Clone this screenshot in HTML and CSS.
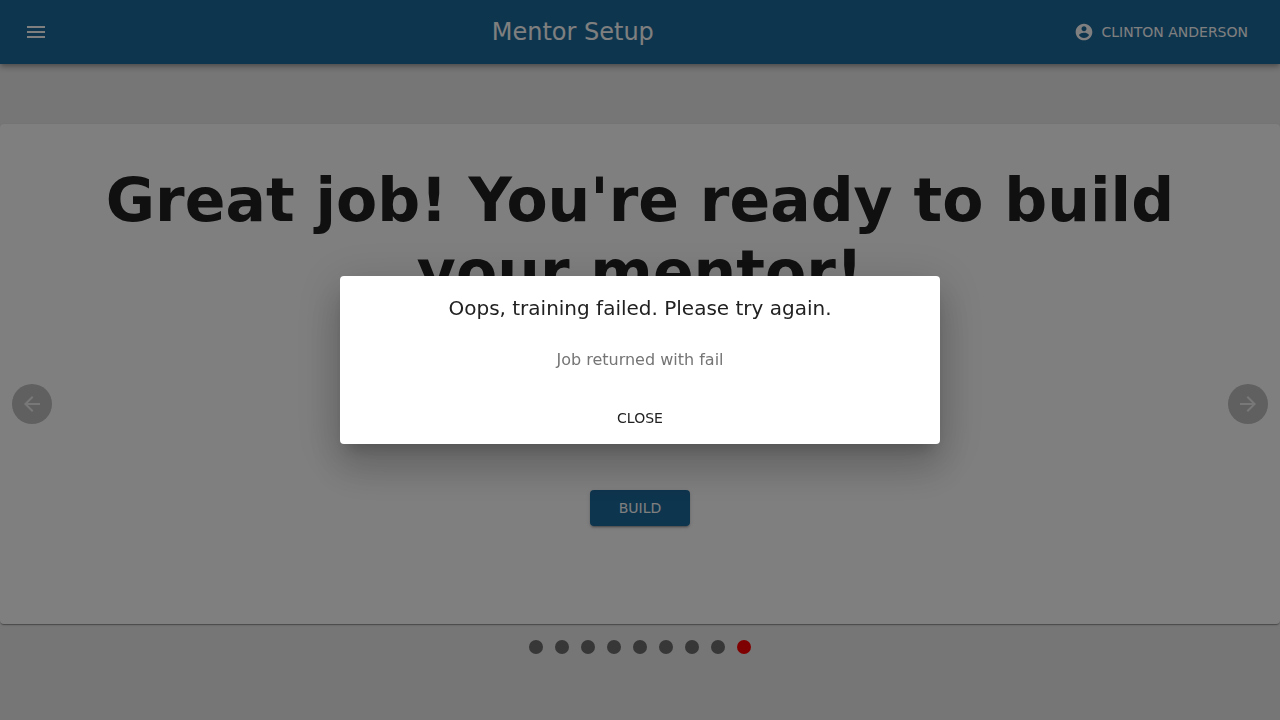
FILE: index.html
```html
<!DOCTYPE html>
<html lang="en">
<head>
<meta charset="utf-8">
<meta name="viewport" content="width=device-width, initial-scale=1">
<title>Mentor Setup</title>
<link rel="stylesheet" href="styles.css">
</head>
<body>
<header class="app-bar">
  <button class="menu-button" type="button" aria-label="Menu">
    <svg class="icon" viewBox="0 0 24 24"><path d="M3 18h18v-2H3v2zm0-5h18v-2H3v2zm0-7v2h18V6H3z"/></svg>
  </button>
  <h1 class="app-title">Mentor Setup</h1>
  <button class="user-button" type="button">
    <svg class="icon icon-small" viewBox="0 0 24 24"><path d="M12 2C6.48 2 2 6.48 2 12s4.480 10 10 10 10-4.480 10-10S17.520 2 12 2zm0 3c1.660 0 3 1.340 3 3s-1.340 3-3 3-3-1.340-3-3 1.340-3 3-3zm0 14.200c-2.500 0-4.710-1.280-6-3.220.030-1.990 4-3.080 6-3.080 1.990 0 5.970 1.090 6 3.080-1.290 1.940-3.500 3.220-6 3.220z"/></svg>
    <span>Clinton Anderson</span>
  </button>
</header>

<main class="page">
  <section class="slide">
    <button class="arrow-button" type="button" aria-label="Previous">
      <svg class="icon" viewBox="0 0 24 24"><path d="M20 11H7.830l5.590-5.590L12 4l-8 8 8 8 1.410-1.410L7.830 13H20v-2z"/></svg>
    </button>
    <div class="slide-content">
      <h2 class="slide-title">Great job! You're ready to build your mentor!</h2>
      <button class="build-button" type="button">Build</button>
    </div>
    <button class="arrow-button" type="button" aria-label="Next">
      <svg class="icon" viewBox="0 0 24 24"><path d="M12 4l-1.410 1.410L16.170 11H4v2h12.170l-5.580 5.590L12 20l8-8z"/></svg>
    </button>
  </section>
  <nav class="dots" aria-label="Slides">
    <button class="dot" type="button" aria-label="Slide 1"></button>
    <button class="dot" type="button" aria-label="Slide 2"></button>
    <button class="dot" type="button" aria-label="Slide 3"></button>
    <button class="dot" type="button" aria-label="Slide 4"></button>
    <button class="dot" type="button" aria-label="Slide 5"></button>
    <button class="dot" type="button" aria-label="Slide 6"></button>
    <button class="dot" type="button" aria-label="Slide 7"></button>
    <button class="dot" type="button" aria-label="Slide 8"></button>
    <button class="dot dot-active" type="button" aria-label="Slide 9" aria-current="true"></button>
  </nav>
</main>

<div class="backdrop">
  <div class="dialog" role="dialog" aria-modal="true" aria-labelledby="dialog-title">
    <h2 class="dialog-title" id="dialog-title">Oops, training failed. Please try again.</h2>
    <p class="dialog-text">Job returned with fail</p>
    <div class="dialog-actions">
      <button class="close-button" type="button">Close</button>
    </div>
  </div>
</div>
</body>
</html>
```
FILE: styles.css
```css
* {
  box-sizing: border-box;
}

body {
  margin: 0;
  min-height: 100vh;
  background: #ededed;
  color: #212121;
  font-family: "DejaVu Sans", sans-serif;
  font-size: 16px;
  line-height: 24px;
}

h1, h2, p {
  margin: 0;
}

button {
  padding: 0;
  border: 0;
  background: none;
  color: inherit;
  font: inherit;
  cursor: pointer;
}

.icon {
  display: block;
  width: 24px;
  height: 24px;
  fill: currentColor;
}

.icon-small {
  width: 20px;
  height: 20px;
}

.app-bar {
  position: relative;
  display: flex;
  align-items: center;
  min-height: 64px;
  padding: 0 24px 0 12px;
  background: #1c6a9c;
  color: #fff;
  box-shadow: 0 2px 4px -1px rgba(0, 0, 0, .2), 0 4px 5px rgba(0, 0, 0, .14), 0 1px 10px rgba(0, 0, 0, .12);
}

.menu-button {
  margin-right: 16px;
  padding: 12px;
}

.app-title {
  flex: 1;
  font-size: 24px;
  font-weight: 400;
  line-height: 32px;
  text-align: center;
}

.user-button,
.build-button,
.close-button {
  font-size: 14px;
  line-height: 24px;
  text-transform: uppercase;
}

.user-button {
  display: flex;
  align-items: center;
  gap: 8px;
  padding: 6px 8px 6px 4px;
}

.page {
  padding-top: 60px;
}

.slide {
  display: grid;
  grid-template-columns: 64px 1fr 64px;
  align-items: center;
  justify-items: center;
  min-height: 500px;
  border-radius: 4px;
  background: #fff;
  box-shadow: 0 2px 1px -1px rgba(0, 0, 0, .2), 0 1px 1px rgba(0, 0, 0, .14), 0 1px 3px rgba(0, 0, 0, .12);
}

.arrow-button {
  margin-top: 60px;
  padding: 8px;
  border-radius: 50%;
  background: #c0c0c0;
  color: #f0f0f0;
}

.slide-content {
  align-self: stretch;
  display: flex;
  flex-direction: column;
  align-items: center;
  justify-content: space-between;
  padding: 40px 0 98px;
}

.slide-title {
  font-size: 60px;
  line-height: 72px;
  text-align: center;
}

.build-button {
  min-width: 100px;
  padding: 6px 16px;
  border-radius: 4px;
  background: #1c6a9c;
  color: #fff;
  box-shadow: 0 3px 1px -2px rgba(0, 0, 0, .2), 0 2px 2px rgba(0, 0, 0, .14), 0 1px 5px rgba(0, 0, 0, .12);
}

.dots {
  display: flex;
  justify-content: center;
  gap: 12px;
  padding: 16px;
}

.dot {
  width: 14px;
  height: 14px;
  border-radius: 50%;
  background: #6e6e6e;
}

.dot-active {
  background: #f00;
}

.backdrop {
  position: fixed;
  inset: 0;
  display: flex;
  align-items: center;
  justify-content: center;
  background: rgba(0, 0, 0, .5);
}

.dialog {
  width: 100%;
  max-width: 600px;
  border-radius: 4px;
  background: #fff;
  text-align: center;
  box-shadow: 0 11px 15px -7px rgba(0, 0, 0, .2), 0 24px 38px 3px rgba(0, 0, 0, .14), 0 9px 46px 8px rgba(0, 0, 0, .12);
}

.dialog-title {
  padding: 16px 24px;
  font-size: 20px;
  font-weight: 400;
  line-height: 32px;
}

.dialog-text {
  padding: 8px 24px 20px;
  color: #757575;
}

.dialog-actions {
  display: flex;
  justify-content: center;
  padding: 8px;
}

.close-button {
  min-width: 64px;
  padding: 6px 8px;
}
```
